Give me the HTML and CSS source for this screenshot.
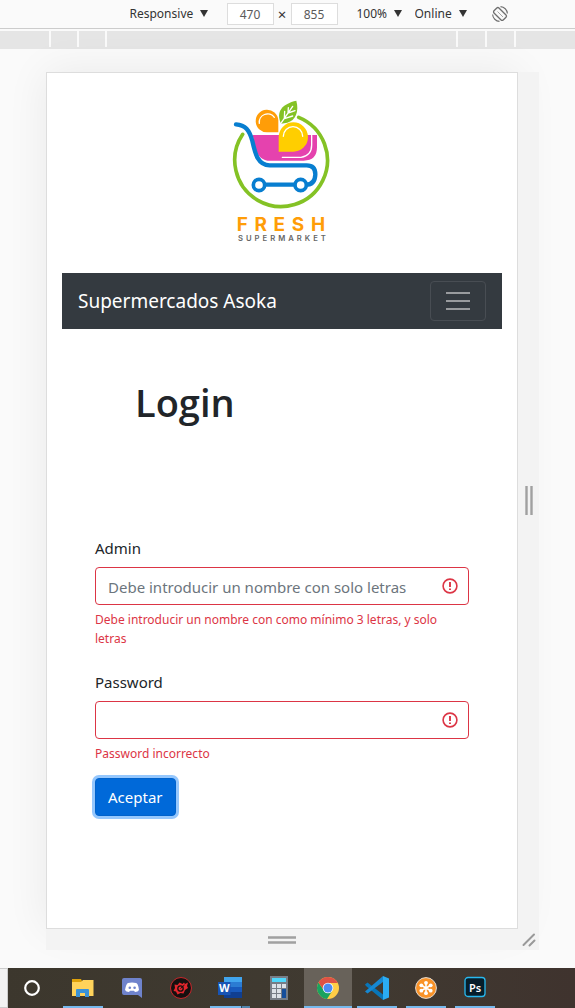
FILE: index.html
```html
<!DOCTYPE html>
<html lang="es">
<head>
<meta charset="utf-8">
<meta name="viewport" content="width=device-width, initial-scale=1">
<title>Supermercados Asoka</title>
<link rel="stylesheet" href="styles.css">
</head>
<body>
<div class="toolbar">
  <label class="picker picker-device">
    <select aria-label="Device"><option>Responsive</option></select>
    <svg viewBox="0 0 8 7"><path d="M0 0h8L4 7z"/></svg>
  </label>
  <div class="size">
    <input type="text" value="470" aria-label="Width">
    <span>×</span>
    <input type="text" value="855" aria-label="Height">
  </div>
  <label class="picker picker-zoom">
    <select aria-label="Zoom"><option>100%</option></select>
    <svg viewBox="0 0 8 7"><path d="M0 0h8L4 7z"/></svg>
  </label>
  <label class="picker picker-network">
    <select aria-label="Network"><option>Online</option></select>
    <svg viewBox="0 0 8 7"><path d="M0 0h8L4 7z"/></svg>
  </label>
  <button class="rotate" type="button" aria-label="Rotate">
    <svg viewBox="0 0 16 16" fill="none" stroke="#6e6e6e"><rect x="4.500" y="1.500" width="7" height="13" rx="1.500" transform="rotate(-45 8 8)" stroke-width="1.300"/><path d="M5.500 5.500l5.500 5.500" stroke-width=".6"/><path d="M8.500 .6a7.400 7.400 0 0 1 6.900 6.900M7.500 15.400a7.400 7.400 0 0 1-6.900-6.900" stroke-width="1.100"/></svg>
  </button>
</div>
<div class="ruler">
  <div class="ticks"><i></i><i></i><i></i></div>
  <div class="ticks ticks-right"><i></i><i></i><i></i></div>
</div>

<div class="stage">
  <main class="device">
    <svg class="logo" viewBox="6 0 360 480" role="img" aria-label="Fresh Supermarket">
      <g fill="none" stroke-linecap="round" stroke-linejoin="round">
        <path d="M68 133A139 139 0 1 0 236 82" stroke="#84c225" stroke-width="11"/>
        <path d="M98 135H291V172Q291 212 251 212H142Q112 207 104 165Z" fill="#e542ae"/>
        <path d="M275 136V165Q275 197 243 202H187" stroke="#fff" stroke-width="4"/>
        <path d="M175 127H143A34 34 0 1 1 175 91Z" fill="#ff9d08"/>
        <path d="M118 100A25 25 0 0 1 163 82" stroke="#fff" stroke-width="4"/>
        <path d="M183 101C166 64 188 41 229 32C238 65 226 91 202 98Z" fill="#84c225"/>
        <path d="M182 101L218 49M193 86L194 64M193 86L218 78M204 69L205 53M204 69L225 62" stroke="#fff" stroke-width="4"/>
        <path d="M176 185V141A44 44 0 1 1 220 185Z" fill="#ffce00"/>
        <path d="M190 139A29 29 0 0 1 248 139" stroke="#fff" stroke-width="4"/>
        <path d="M48 103C76 105 88 120 97 153C106 194 114 225 149 226H260Q286 226 286 253Q285 284 258 284H117" stroke="#087ed0" stroke-width="13"/>
        <circle cx="117" cy="285" r="17" fill="#fff" stroke="#087ed0" stroke-width="11"/>
        <circle cx="242" cy="285" r="17" fill="#fff" stroke="#087ed0" stroke-width="11"/>
      </g>
      <text class="logo-name" x="50" y="422">FRESH</text>
      <text class="logo-sub" x="54" y="452">SUPERMARKET</text>
    </svg>
    <nav class="navbar">
      <a class="brand" href="#">Supermercados Asoka</a>
      <button class="toggler" type="button" aria-label="Menú">
        <svg viewBox="0 0 30 30" stroke="#999b9e" stroke-width="2"><path d="M3 7h24M3 15h24M3 23h24"/></svg>
      </button>
    </nav>
    <h1>Login</h1>
    <form class="login">
      <div class="field">
        <label for="admin">Admin</label>
        <div class="control">
          <input id="admin" type="text" placeholder="Debe introducir un nombre con solo letras" aria-describedby="admin-error">
          <svg viewBox="0 0 16 16" fill="none" stroke="#dc3545" stroke-width="1.600"><circle cx="8" cy="8" r="6.900"/><path d="M8 4v5M8 10.500v1.500" stroke-width="1.900"/></svg>
        </div>
        <p class="error" id="admin-error">Debe introducir un nombre con como mínimo 3 letras, y solo letras</p>
      </div>
      <div class="field field-last">
        <label for="password">Password</label>
        <div class="control">
          <input id="password" type="password" aria-describedby="password-error">
          <svg viewBox="0 0 16 16" fill="none" stroke="#dc3545" stroke-width="1.600"><circle cx="8" cy="8" r="6.900"/><path d="M8 4v5M8 10.500v1.500" stroke-width="1.900"/></svg>
        </div>
        <p class="error" id="password-error">Password incorrecto</p>
      </div>
      <button class="submit" type="button">Aceptar</button>
    </form>
  </main>
  <div class="handle handle-right"><svg viewBox="0 0 8 29" width="8" height="29"><path d="M1.500 0v29M6.500 0v29" stroke="#a0a0a0" stroke-width="2.400"/></svg></div>
  <div class="handle handle-bottom"><svg viewBox="0 0 28 8" width="28" height="8"><path d="M0 1.500h28M0 6.500h28" stroke="#a0a0a0" stroke-width="2.400"/></svg></div>
  <div class="handle handle-corner"><svg viewBox="0 0 14 14" width="14" height="14"><path d="M1.500 12L12 1.500M7.500 12.500L12.500 7.500" stroke="#999" stroke-width="2" stroke-linecap="round"/></svg></div>
</div>

<footer class="taskbar">
  <div class="search-edge"></div>
  <button class="task task-first" type="button" aria-label="Cortana"><svg viewBox="0 0 24 24"><circle cx="12" cy="12" r="6.800" fill="none" stroke="#fff" stroke-width="2.200"/></svg></button>
  <button class="task open" type="button" aria-label="Explorador"><svg viewBox="0 0 24 24"><path d="M1 3h9l1 2v4H1z" fill="#dfa20b"/><path d="M1 6h9l2-2h10.500v16H1z" fill="#ffd35b"/><path d="M5 21v-7q0-1 1-1h11q1 0 1 1v7h-4v-4H9v4z" fill="#3b93d7"/></svg></button>
  <button class="task" type="button" aria-label="Discord"><svg viewBox="0 0 24 24"><path d="M4 2h16q2 0 2 2v18l-4-3H4q-2 0-2-2V4q0-2 2-2z" fill="#6f83cc"/><path d="M8 7q4-1 8 0 2 0 3 7-1 2-4 2l-1-1.300h-4L9 16q-3 0-4-2 1-6 3-7z" fill="#fff"/><circle cx="9.800" cy="11.800" r="1.300" fill="#6f83cc"/><circle cx="14.600" cy="11.800" r="1.300" fill="#6f83cc"/></svg></button>
  <button class="task" type="button" aria-label="Launcher"><svg viewBox="0 0 24 24"><circle cx="12" cy="12" r="10.500" fill="#15100f" stroke="#c5282c"/><path d="M5.500 8.500l3 .5 2-2.500 3 1.500 1.500-1.500 1 1.500 3-1.500-1 3.500 1 2-3 2-1.500 3.500-3-.5-3 1.500-1.500-3-2.500-.5 1.500-3z" fill="#e3262d"/><circle cx="11.500" cy="12.500" r="2.700" fill="none" stroke="#15100f" stroke-width="1.300"/><path d="M11.500 12.500l4-3.500" stroke="#15100f"/></svg></button>
  <button class="task open open-many" type="button" aria-label="Word"><svg viewBox="0 0 24 24"><path d="M6 1h18v6H6z" fill="#41a5ee"/><path d="M6 6h18v6H6z" fill="#2b7cd3"/><path d="M6 11h18v6H6z" fill="#185abd"/><path d="M6 16h18v6H6z" fill="#103f91"/><path d="M0 6h12.500v13H0z" fill="#1854b4"/><text class="word-mark" x="6.200" y="16.200">W</text></svg></button>
  <button class="task" type="button" aria-label="Calculadora"><svg viewBox="0 0 24 24"><path d="M3 0h18v24H3z" fill="#777d87"/><path d="M5 2h14v4H5z" fill="#50d7fb"/><path d="M5 8h4v4H5zM10 8h4v4h-4zM15 8h4v4h-4zM5 13h4v4H5zM10 13h4v4h-4zM5 18h4v4H5zM10 18h4v4h-4z" fill="#dce1e8"/><path d="M15 13h4v9h-4z" fill="#164e9b"/></svg></button>
  <button class="task open active" type="button" aria-label="Chrome"><svg viewBox="0 0 24 24"><circle cx="12" cy="12" r="11" fill="#ffcd46"/><path d="M2.470 6.500A11 11 0 0 0 11 23l5.500-8.500L12 12 7 13z" fill="#1aa260"/><path d="M12 1a11 11 0 0 1 9.800 6H12l-5 6-4.500-6.500A11 11 0 0 1 12 1z" fill="#de5246"/><circle cx="12" cy="12" r="5.300" fill="#fff"/><circle cx="12" cy="12" r="4.500" fill="#4c8bf5"/></svg></button>
  <button class="task open" type="button" aria-label="Visual Studio Code"><svg viewBox="0 0 24 24"><path d="M0 8.500L2.500 6.500 18 18.500V24L1 10z" fill="#0876b9"/><path d="M0 15.500L18 0v6L2.500 17.500z" fill="#1688d2"/><path d="M18 0l6 2.500v19L18 24z" fill="#2bacf2"/></svg></button>
  <button class="task open" type="button" aria-label="Xampp"><svg viewBox="0 0 24 24"><circle cx="12" cy="12" r="10.400" fill="#f99227" stroke="#e6dcd2"/><path d="M12 7v10M7.500 9.500l9 5M16.500 9.500l-9 5" stroke="#fff" stroke-width="1.500"/><g fill="#fff"><circle cx="12" cy="6.800" r="1.900"/><circle cx="12" cy="17.200" r="1.900"/><circle cx="7.300" cy="9.300" r="1.900"/><circle cx="16.700" cy="9.300" r="1.900"/><circle cx="7.300" cy="14.700" r="1.900"/><circle cx="16.700" cy="14.700" r="1.900"/></g></svg></button>
  <button class="task open" type="button" aria-label="Photoshop"><svg viewBox="0 0 24 24"><rect x="2" y="1.500" width="20" height="19" rx="3" fill="#061e2b" stroke="#28b9ef" stroke-width="1.300"/><text class="ps-mark" x="12" y="15.500">Ps</text></svg></button>
</footer>
</body>
</html>
```
FILE: styles.css
```css
* { box-sizing: border-box; }

body {
  margin: 0;
  min-height: 100vh;
  display: flex;
  flex-direction: column;
  background: #fafafa;
  color: #212529;
  font-family: "Noto Sans", "Open Sans", sans-serif;
  font-size: 15px;
  line-height: 24px;
}

button, input, select { font: inherit; color: inherit; }
svg { display: block; }

/* Device toolbar */
.toolbar {
  display: flex;
  align-items: center;
  justify-content: center;
  height: 29px;
  padding: 0 4px 0 66px;
  border-bottom: 1px solid #ccc;
  color: #333;
  font-size: 12px;
  line-height: 16px;
}
.picker { position: relative; }
.picker select {
  display: block;
  width: 100%;
  padding: 0;
  border: 0;
  appearance: none;
  background: none;
}
.picker svg {
  position: absolute;
  right: 0;
  top: 4px;
  width: 8px;
  height: 7px;
  fill: #333;
  pointer-events: none;
}
.picker-device { width: 78px; margin-right: 19px; }
.picker-zoom { width: 45px; margin-right: 13px; }
.picker-network { width: 52px; margin-right: 25px; }
.size { display: flex; align-items: center; margin-right: 19px; }
.size input {
  width: 47px;
  height: 22px;
  padding: 0;
  border: 1px solid #ddd;
  background: #fff;
  color: #5a5a5a;
  text-align: center;
}
.size span { width: 17px; text-align: center; font-size: 15px; }
.rotate { padding: 0; border: 0; background: none; }
.rotate svg { width: 16px; height: 16px; }

/* Breakpoint ruler */
.ruler {
  display: flex;
  justify-content: space-between;
  height: 18px;
  margin-top: 2px;
  padding: 0 59px 0 49px;
  background: #e5e5e5;
}
.ticks { display: flex; gap: 26px; height: 16px; }
.ticks i { width: 2px; background: #fafafa; }
.ticks-right { gap: 27px; }

/* Emulated device */
.stage {
  flex: 1;
  display: grid;
  grid-template-columns: 1fr 21px;
  grid-template-rows: 1fr 21px;
  padding: 23px 36px 18px 46px;
}
.device {
  display: flex;
  flex-direction: column;
  padding: 17px 15px;
  border: 1px solid #ddd;
  background: #fff;
  box-shadow: 0 0 40px rgba(0, 0, 0, .07);
}
.handle {
  display: flex;
  align-items: center;
  justify-content: center;
  background: #f3f3f3;
  z-index: 1;
}

.logo { align-self: center; width: 120px; height: 160px; margin-bottom: 23px; }
.logo-name {
  fill: #ff9d08;
  font-family: Inter, sans-serif;
  font-size: 57px;
  font-weight: 700;
  letter-spacing: 20px;
}
.logo-sub {
  fill: #666;
  font-family: Inter, sans-serif;
  font-size: 23px;
  font-weight: 600;
  letter-spacing: 9px;
}

.navbar {
  display: flex;
  align-items: center;
  justify-content: space-between;
  padding: 8px 16px;
  background: #343a40;
}
.brand { color: #fff; font-size: 19px; line-height: 30px; text-decoration: none; }
.toggler {
  display: flex;
  align-items: center;
  justify-content: center;
  width: 56px;
  height: 40px;
  padding: 0;
  border: 1px solid #484d53;
  border-radius: 4px;
  background: none;
}
.toggler svg { width: 30px; height: 30px; }

h1 {
  margin: 49px 0 110px;
  padding-left: 73px;
  font-size: 38px;
  line-height: 48px;
  font-weight: 600;
  font-family: "Open Sans", "Noto Sans", sans-serif;
}
.login { padding: 0 33px; }
.field { margin-bottom: 22px; }
.field-last { margin-bottom: 15px; }
.field label { display: block; margin-bottom: 7px; }
.control { position: relative; }
.control input {
  display: block;
  width: 100%;
  height: 38px;
  padding: 2px 36px 0 12px;
  border: 1px solid #dc3545;
  border-radius: 4px;
  background: #fff;
}
.control input::placeholder { color: #6c757d; opacity: 1; }
.control svg { position: absolute; right: 11px; top: 11px; width: 16px; height: 16px; }
.error { margin: 5px 0 0; color: #dc3545; font-size: 12px; line-height: 19px; }
.submit {
  height: 38px;
  padding: 0 12px;
  border: 1px solid #0062cc;
  border-radius: 4px;
  background: #0069d9;
  color: #fff;
  box-shadow: 0 0 0 3px #95c7fd;
}

/* Desktop taskbar */
.taskbar {
  display: flex;
  height: 40px;
  background: linear-gradient(90deg, #3c372d, #403a31 60%, #3f332e);
}
.search-edge { width: 8px; border: 1px solid #ccc; border-left: 0; background: #f2f2f2; }
.task {
  display: flex;
  justify-content: center;
  align-items: center;
  width: 48px;
  margin-right: 1px;
  padding: 0;
  border: 0;
  background: none no-repeat center bottom / 40px 2px;
}
.task-first { margin-right: 3px; }
.task svg { width: 24px; height: 24px; }
.open { background-image: linear-gradient(#76b9ed, #76b9ed); }
.open-many { background-image: linear-gradient(90deg, #76b9ed 31px, #2f4a5c 31px, #2f4a5c 32px, #5286ad 32px); }
.active { background-color: #68625a; background-size: 100% 2px; }
.word-mark { fill: #fff; font-size: 11px; font-weight: 700; text-anchor: middle; }
.ps-mark { fill: #fff; font-size: 11px; font-weight: 600; text-anchor: middle; }
```
